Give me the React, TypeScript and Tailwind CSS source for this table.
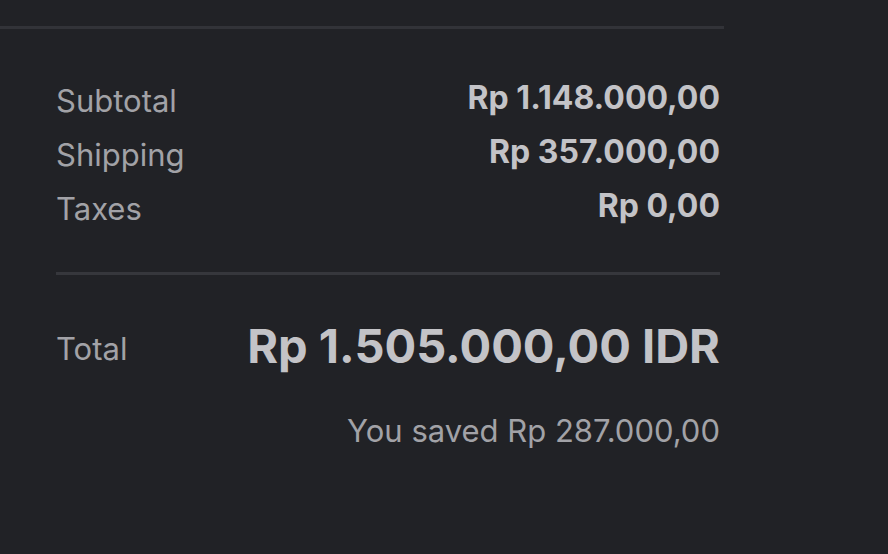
export default function App() {
  const font = { fontFamily: "Inter, 'Noto Sans', sans-serif" };
  return (
    <div className="w-[888px] h-[554px] bg-[#212226] overflow-hidden" style={font}>
      <div className="w-[724px] pt-[26px]">
        <div className="h-[3px] bg-[#323338]" />
        <div className="pl-[56px] pr-[4px]">
          <div className="pt-[44px] flex flex-col">
            <div className="flex justify-between items-center h-[54px] leading-none">
              <span className="text-[31px] text-[#a2a2a7]">Subtotal</span>
              <span className="text-[32px] font-bold text-[#c3c3c7] -mt-[4px]">Rp 1.148.000,00</span>
            </div>
            <div className="flex justify-between items-center h-[54px] leading-none">
              <span className="text-[31px] text-[#a2a2a7]">Shipping</span>
              <span className="text-[32px] font-bold text-[#c3c3c7] -mt-[4px]">Rp 357.000,00</span>
            </div>
            <div className="flex justify-between items-center h-[54px] leading-none">
              <span className="text-[31px] text-[#a2a2a7]">Taxes</span>
              <span className="text-[32px] font-bold text-[#c3c3c7] -mt-[4px]">Rp 0,00</span>
            </div>
          </div>
          <div className="h-[3px] bg-[#36373c] mt-[37px]" />
          <div className="flex justify-between items-center h-[144px] leading-none">
            <span className="text-[31px] text-[#a2a2a7] mt-[2px]">Total</span>
            <span className="text-[47px] font-bold text-[#c3c3c7] -mt-[4px]">Rp 1.505.000,00 IDR</span>
          </div>
          <div className="flex justify-end -mt-[8px] leading-[40px]">
            <span className="text-[31px] text-[#a2a2a7]">You saved Rp 287.000,00</span>
          </div>
        </div>
      </div>
    </div>
  );
}
